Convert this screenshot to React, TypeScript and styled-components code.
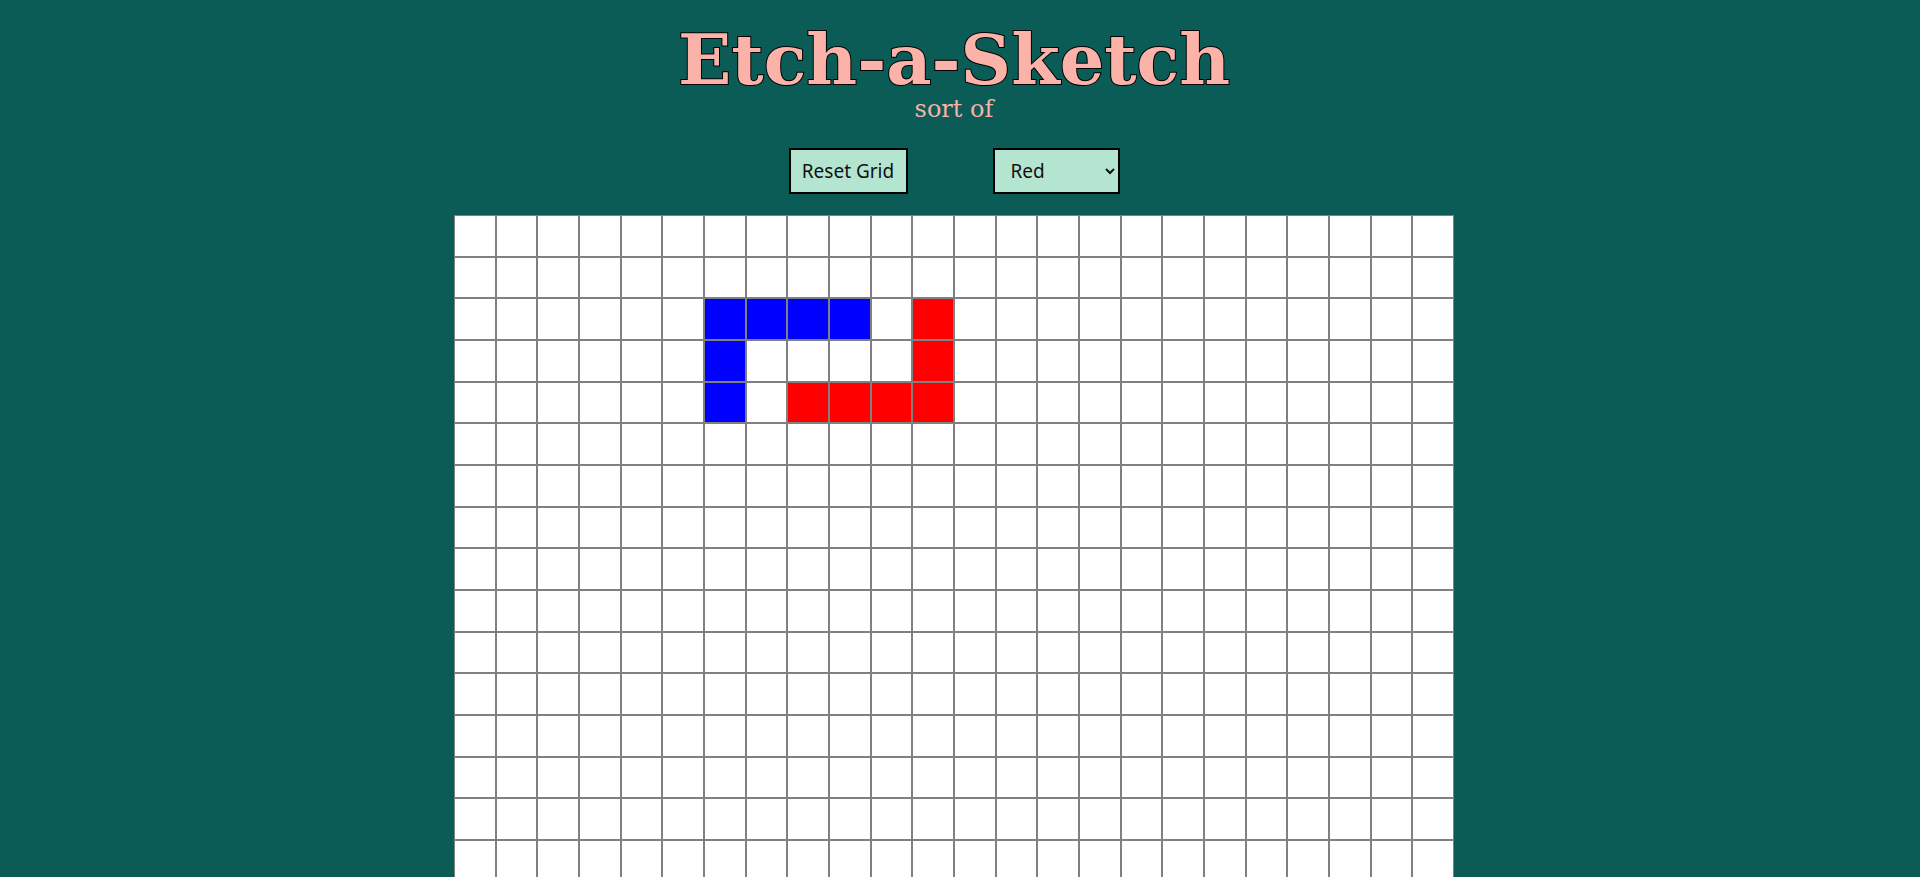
import React, { useState } from "react";
import styled, { createGlobalStyle } from "styled-components";

const SIZE = 24;

const GlobalStyle = createGlobalStyle`
  html {
    scrollbar-color: #6f9591 #0f4a45;
  }
  body {
    margin: 0;
    background: #0b5c56;
    font-family: "DejaVu Serif", serif;
  }
`;

const Page = styled.main`
  display: flex;
  flex-direction: column;
  align-items: center;
  padding: 25px 12px 36px 0;
`;

const Title = styled.h1`
  margin: 0;
  font-family: "DejaVu Serif", serif;
  font-weight: bold;
  font-size: 70px;
  line-height: 70px;
  color: #fbb3a9;
  -webkit-text-stroke: 2px #000;
  paint-order: stroke fill;
`;

const Subtitle = styled.p`
  margin: 2px 0 0;
  font-family: "DejaVu Serif", serif;
  font-size: 24px;
  line-height: 24px;
  color: #f6b2a6;
`;

const Controls = styled.div`
  display: flex;
  align-items: center;
  gap: 85px;
  margin-top: 27px;
`;

const ControlBase = `
  box-sizing: border-box;
  height: 46px;
  border: 2px solid #000;
  border-radius: 0;
  background: #b4e5d1;
  color: #111;
  font-family: "Noto Sans", "Open Sans", sans-serif;
  font-size: 19px;
  cursor: pointer;
`;

const ResetButton = styled.button`
  ${ControlBase}
  width: 119px;
  padding: 0 10px;
`;

const ColorSelect = styled.select`
  ${ControlBase}
  width: 127px;
  padding: 0 6px 0 12px;
`;

const Board = styled.div`
  display: grid;
  grid-template-columns: repeat(${SIZE}, 1fr);
  width: 1000px;
  height: 1000px;
  margin-top: 21px;
  background: #fff;
`;

const Cell = styled.div<{ $fill: string }>`
  box-sizing: border-box;
  border: 1px solid #808080;
  background: ${(p) => p.$fill};
`;

const COLORS: Record<string, string> = {
  Red: "#ff0000",
  Blue: "#0000ff",
  Green: "#00ff00",
  Black: "#000000",
};

function initialCells(): string[] {
  const cells = Array(SIZE * SIZE).fill("#ffffff");
  const set = (r: number, c: number, col: string) => {
    cells[r * SIZE + c] = col;
  };
  [6, 7, 8, 9].forEach((c) => set(2, c, COLORS.Blue));
  set(3, 6, COLORS.Blue);
  set(4, 6, COLORS.Blue);
  set(2, 11, COLORS.Red);
  set(3, 11, COLORS.Red);
  [8, 9, 10, 11].forEach((c) => set(4, c, COLORS.Red));
  return cells;
}

export default function App() {
  const [cells, setCells] = useState<string[]>(initialCells);
  const [color, setColor] = useState("Red");

  const paint = (i: number) => {
    setCells((prev) => {
      const next = prev.slice();
      next[i] = COLORS[color];
      return next;
    });
  };

  return (
    <>
      <GlobalStyle />
      <Page>
        <Title>Etch-a-Sketch</Title>
        <Subtitle>sort of</Subtitle>
        <Controls>
          <ResetButton onClick={() => setCells(Array(SIZE * SIZE).fill("#ffffff"))}>
            Reset Grid
          </ResetButton>
          <ColorSelect value={color} onChange={(e) => setColor(e.target.value)}>
            {Object.keys(COLORS).map((c) => (
              <option key={c} value={c}>
                {c}
              </option>
            ))}
          </ColorSelect>
        </Controls>
        <Board>
          {cells.map((fill, i) => (
            <Cell key={i} $fill={fill} onMouseOver={() => paint(i)} />
          ))}
        </Board>
      </Page>
    </>
  );
}
